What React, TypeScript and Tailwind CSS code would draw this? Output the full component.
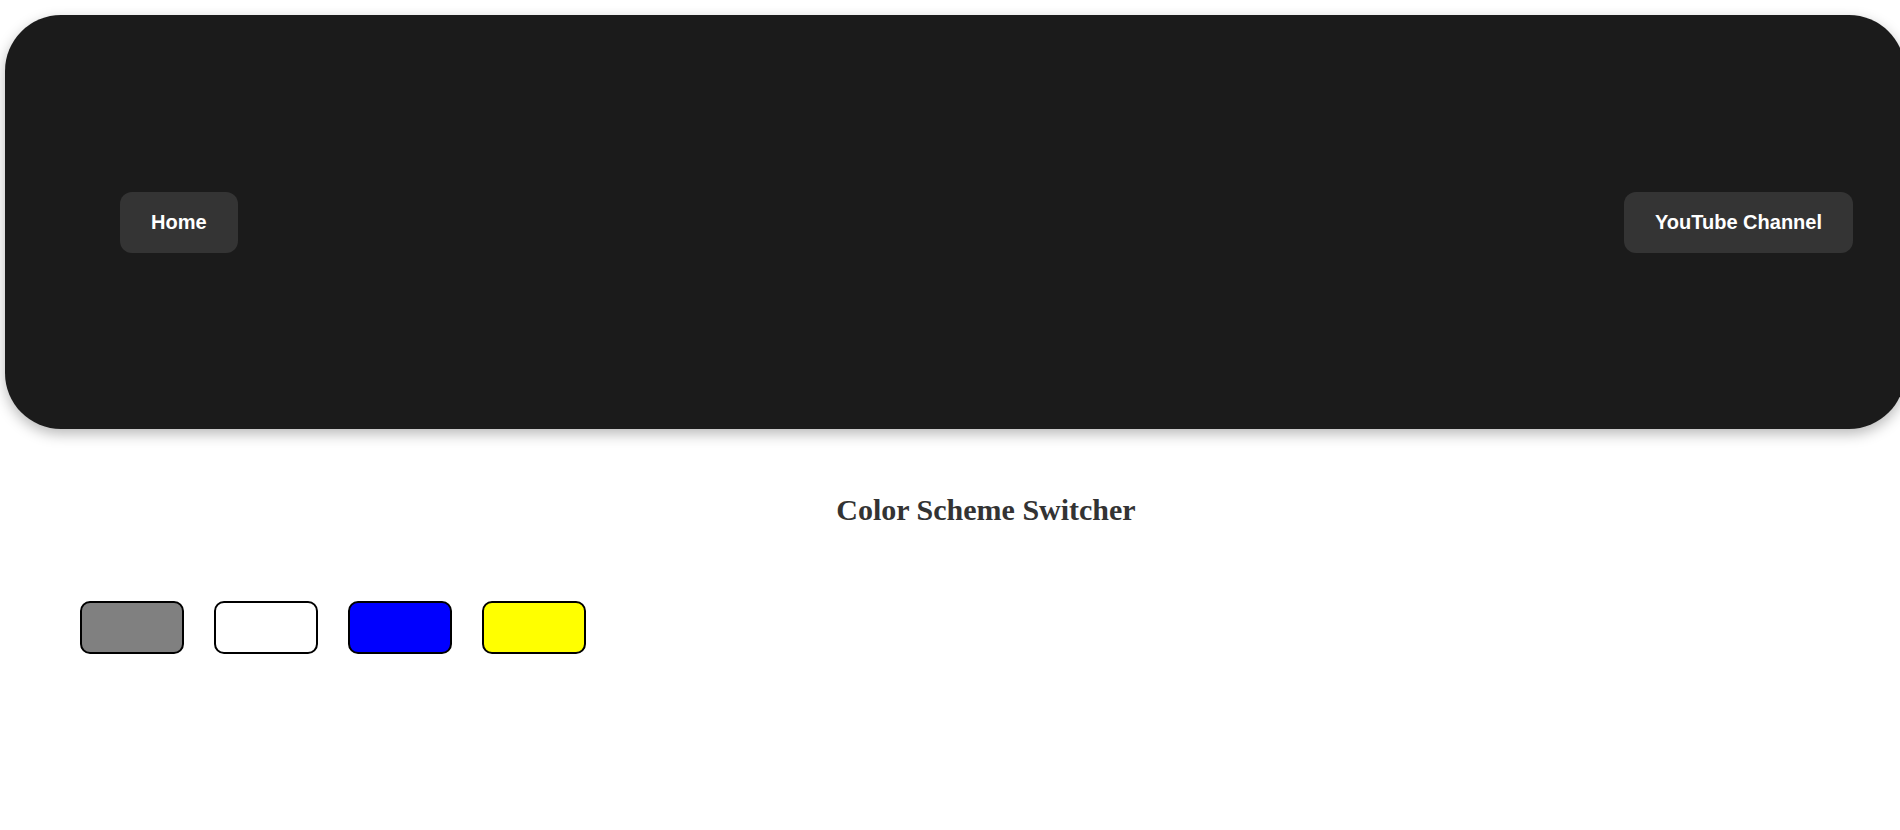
import React from "react";

export default function App() {
  const swatches = ["bg-[#808080]", "bg-white", "bg-[#0000ff]", "bg-[#ffff00]"];
  return (
    <div className="w-full min-h-[830px] overflow-hidden bg-white" style={{ fontFamily: '"Liberation Sans", Arial, sans-serif' }}>
      <header className="ml-[5px] mt-[15px] w-full h-[414px] rounded-[56px] bg-[#1b1b1b] shadow-[0_5px_14px_rgba(0,0,0,0.28)] flex items-center justify-between pl-[115px] pr-[52px]">
        <button className="h-[61px] px-[31px] rounded-[12px] bg-[#343434] text-white font-bold text-[20px] leading-none" style={{ fontFamily: '"Liberation Sans", Arial, sans-serif' }}>
          Home
        </button>
        <button className="h-[61px] px-[31px] rounded-[12px] bg-[#343434] text-white font-bold text-[20px] leading-none" style={{ fontFamily: '"Liberation Sans", Arial, sans-serif' }}>
          YouTube Channel
        </button>
      </header>
      <div className="flex justify-center pl-[72px] mt-[63px]">
        <h1 className="text-[30px] font-bold text-[#333333] leading-[35px]" style={{ fontFamily: '"Liberation Serif", "Times New Roman", serif' }}>
          Color Scheme Switcher
        </h1>
      </div>
      <div className="flex gap-[30px] pl-[80px] mt-[74px]">
        {swatches.map((c, i) => (
          <div key={i} className={`w-[104px] h-[53px] border-2 border-black rounded-[10px] ${c}`} />
        ))}
      </div>
    </div>
  );
}
